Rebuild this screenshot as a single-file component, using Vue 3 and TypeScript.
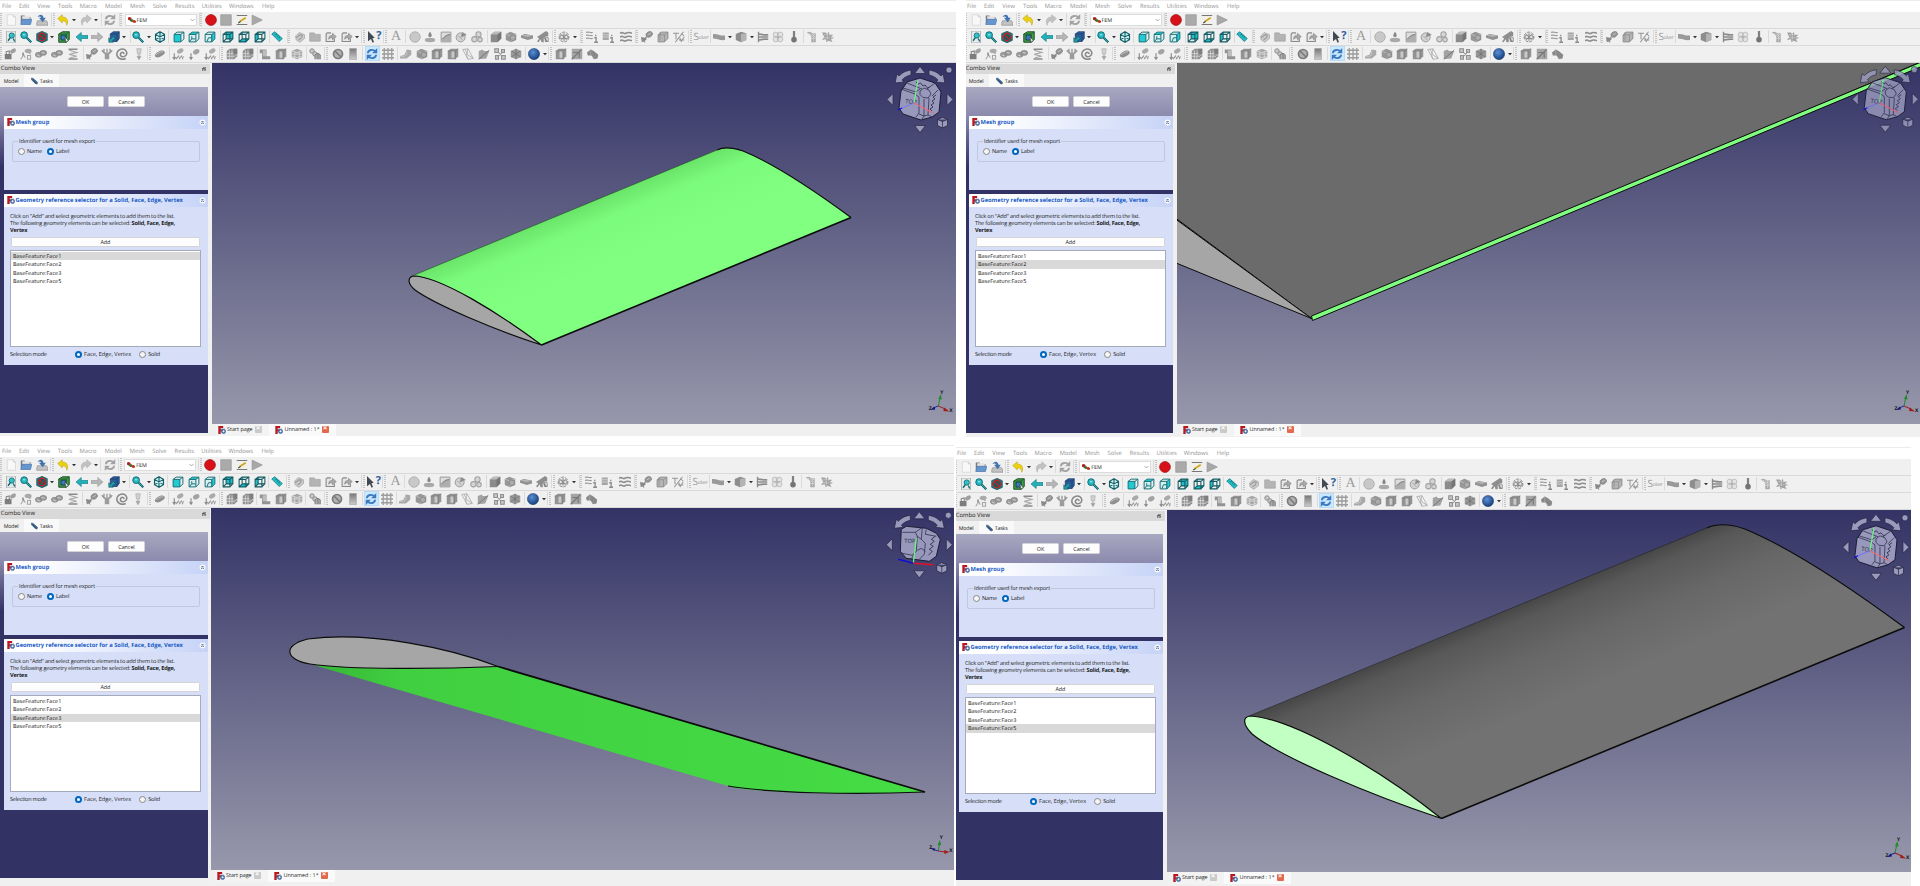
<script setup lang="ts">
interface Slot { k: string; x: number; w: number; gap: number }
interface Shot {
  id: string
  selected: number
  scale: number
  view: string
  cube: [number, number]
  axis: [number, number]
  flat: boolean
}

const shots: Shot[] = [
  { id: 'a', selected: 0, scale: 1, view: '212 63 744 361', cube: [920, 99], axis: [938.3, 406], flat: false },
  { id: 'b', selected: 1, scale: 1, view: '1177 64 743 361', cube: [1885.3, 99.7], axis: [1904, 407], flat: false },
  { id: 'c', selected: 2, scale: 0.998, view: '211 508 743 362', cube: [919.3, 544.3], axis: [938.3, 851], flat: true },
  { id: 'd', selected: 3, scale: 0.999, view: '1167 510 743 362', cube: [1875, 546.8], axis: [1894, 853], flat: false },
]

const menus: [string, number][] = [
  ['File', 17], ['Edit', 18.3], ['View', 20.7], ['Tools', 21.7], ['Macro', 25.3], ['Model', 25],
  ['Mesh', 22.7], ['Solve', 22.3], ['Results', 26.7], ['Utilities', 27.3], ['Windows', 33], ['Help', 20],
]

const widths: Record<string, number> = { drop: 5, sep: 1, grip: 2, combo: 72 }

function lay(spec: string): Slot[] {
  let end = 0
  return spec.trim().split(/\s+/).map((part) => {
    const [k, pos] = part.split(':')
    const x = Number(pos)
    const w = widths[k] ?? 13
    const gap = x - w / 2 - end
    end = x + w / 2
    return { k, x, w, gap }
  })
}

const bars: Slot[][] = [
  lay('grip:1 new:11 open:26 save:42 sep:51 grip:53.5 undo:63 drop:74 redo:86 drop:96 sep:101 refresh:110 sep:119 grip:121 combo:160.5 sep:199 grip:201 record:210.5 stop:226 edit:242 play:257'),
  lay('grip:1 fit:11 zoom:26 nosign:42 drop:52 gcube:64 left:82 right:97 bluebox:114 drop:124 sep:130 zoom:138 drop:149 iso:159.5 sep:168 front:178.5 top:194 side:210 sep:220 rear:228 bottom:244 rear2:260 sep:269 ruler:277 sep:287 grip:289 link:299.5 folder:315 export:331 export:347 drop:357 sep:361.5 grip:364 help:374 sep:383 grip:386 letter:396 sep:405.5 ball:414.5 dropper:430 chart:446 pie:461 rings:477 sep:487 cube:496 cube2:511 slab:527 tree:543 sep:552 grip:555 valve:564 drop:575 sep:580 grip:582 wavei:592 cyli:608 waves:626 sep:635 grip:637 gear:647 boxo:663 frac:679 sep:688 grip:690.5 solver:701 sep:710.5 beam:719 drop:730 face:741 drop:752 pipes:763 clover:778 thermo:794 sep:803 shellx:812 burst:828'),
  lay('grip:1 lock:10 force:26 pair:41 pair:57 spring:73 sep:83 gear:92 pull:107 swirl:122 weight:138.5 sep:147.5 grip:150 pill:160 sep:169 heat:178 tip:194 heat:210 sep:219.5 grip:222 mesh:232 mesh:248 sep:257 cutbox:265 face2:281 drum:297 sep:306 balls:315 sep:324.5 grip:327 forbid:337.5 grad:353 sep:362.5 sync:372 grid:387.5 sep:397 stairs:406 cube2:421.5 face2:437 face2:453 sheet:468 clip:484 net:500 burst2:515.5 sep:525 sphere:534 drop:544.5 sep:548.5 grip:551 face2:561 clipb:577 blob:593'),
]

const faces = ['BaseFeature:Face1', 'BaseFeature:Face2', 'BaseFeature:Face3', 'BaseFeature:Face5']
</script>

<template>
  <svg class="defs" width="0" height="0" aria-hidden="true">
    <defs>
      <linearGradient id="bg" x1="0" y1="0" x2="0" y2="1">
        <stop offset="0" stop-color="#333366" /><stop offset=".5" stop-color="#666689" /><stop offset="1" stop-color="#9898ac" />
      </linearGradient>
      <linearGradient id="wingGreen" gradientUnits="userSpaceOnUse" x1="560" y1="206" x2="588" y2="274">
        <stop offset="0" stop-color="#55bf55" /><stop offset=".1" stop-color="#69e369" /><stop offset=".4" stop-color="#7bfb7b" /><stop offset="1" stop-color="#80ff80" />
      </linearGradient>
      <linearGradient id="wingGrey" gradientUnits="userSpaceOnUse" x1="1480" y1="620" x2="1520" y2="717">
        <stop offset="0" stop-color="#464646" /><stop offset=".15" stop-color="#585858" /><stop offset=".5" stop-color="#676767" /><stop offset="1" stop-color="#727272" />
      </linearGradient>
      <linearGradient id="wingUnder" x1="0" y1="0" x2="1" y2="0">
        <stop offset="0" stop-color="#36b536" /><stop offset=".15" stop-color="#40cf40" /><stop offset="1" stop-color="#45dc45" />
      </linearGradient>
      <radialGradient id="ballBlue" cx=".4" cy=".35" r=".7"><stop offset="0" stop-color="#5b8fd6" /><stop offset="1" stop-color="#123a78" /></radialGradient>
      <linearGradient id="greyFade" x1="0" y1="0" x2="0" y2="1"><stop offset="0" stop-color="#777" /><stop offset="1" stop-color="#ccc" /></linearGradient>

      <symbol id="i-new" viewBox="0 0 16 16"><path d="M3 1h8l3 3v11H3z" fill="#f8f8f8" stroke="#d4d4d4" /><path d="M11 1v3h3" fill="#ddd" stroke="#ccc" /></symbol>
      <symbol id="i-open" viewBox="0 0 16 16"><path d="M1 2h5l1 2h7v10H1z" fill="#777b80" /><path d="M3 3h10v4H3z" fill="#e4e4e4" /><path d="M3 7h13l-2 7H1z" fill="#6696cf" stroke="#4a78b2" stroke-width=".7" /></symbol>
      <symbol id="i-save" viewBox="0 0 16 16"><path d="M2 9h12l2 3v3H1v-3z" fill="#c2c2c2" stroke="#858585" stroke-width=".8" /><path d="M2 4c3-4 7-4 8 1h3l-4 6-5-6h3C6 3 4 3 2 4z" fill="#3f74ae" /></symbol>
      <symbol id="i-undo" viewBox="0 0 16 16"><path d="M1 6l6-5v3c6 0 9 4 6 11 0-4-2-6-6-6v3z" fill="#ecd10f" stroke="#b99f10" stroke-width=".7" /></symbol>
      <symbol id="i-redo" viewBox="0 0 16 16"><path d="M15 6L9 1v3C3 4 0 8 3 15c0-4 2-6 6-6v3z" fill="#c2c2c2" stroke="#aaa" stroke-width=".7" /></symbol>
      <symbol id="i-refresh" viewBox="0 0 16 16"><path d="M2.500 7C3 2 10 1 12.500 5M13.500 9C13 14 6 15 3.500 11" fill="none" stroke="#a2a2a2" stroke-width="2.600" /><path d="M15 0v7H8zM1 16V9h7z" fill="#a2a2a2" /></symbol>
      <symbol id="i-sync" viewBox="0 0 16 16"><path d="M2.500 7C3 2 10 1 12.500 5M13.500 9C13 14 6 15 3.500 11" fill="none" stroke="#3c7abf" stroke-width="2.600" /><path d="M15 0v7H8zM1 16V9h7z" fill="#3c7abf" /></symbol>
      <symbol id="i-record" viewBox="0 0 16 16"><circle cx="8" cy="8" r="7.200" fill="#d81118" stroke="#9c1016" /></symbol>
      <symbol id="i-stop" viewBox="0 0 16 16"><path d="M1 1h14v14H1z" fill="#aaa" stroke="#999" /></symbol>
      <symbol id="i-edit" viewBox="0 0 16 16"><path d="M2 1h12v14H2z" fill="#f1f1e8" /><path d="M1 2h14M1 14h14" stroke="#777" stroke-width="1.400" /><path d="M5 10l8-5" stroke="#d0a31c" stroke-width="2.200" /><path d="M3 12l3-2" stroke="#444" stroke-width="1.500" /></symbol>
      <symbol id="i-play" viewBox="0 0 16 16"><path d="M1.500 1.500L15 8 1.500 14.500z" fill="#a8a8a8" stroke="#959595" /></symbol>
      <symbol id="i-fit" viewBox="0 0 16 16"><path d="M2 0h12v16H2z" fill="#e6e9e9" stroke="#8f9696" stroke-width=".8" /><circle cx="9" cy="6" r="3.500" fill="#2fc2c9" stroke="#0b5e66" /><path d="M7 9l-3 4M11 10l2 4" stroke="#0b6b73" stroke-width="1.800" /></symbol>
      <symbol id="i-zoom" viewBox="0 0 16 16"><circle cx="5.500" cy="5.500" r="4.500" fill="#27b9c2" stroke="#0b6670" stroke-width="1.200" /><path d="M4 5h3" stroke="#c4f2f3" stroke-width="1.200" /><path d="M9 9l6 6" stroke="#0b5e66" stroke-width="3" /><path d="M9.500 9.500l5 5" stroke="#31c5cb" stroke-width="1" /></symbol>
      <symbol id="i-nosign" viewBox="0 0 16 16"><path d="M1 3.500l7-3 7 3v9l-7 3-7-3z" fill="#14828d" stroke="#0c4d55" /><circle cx="8" cy="8" r="5" fill="#1d5a60" stroke="#c81e1e" stroke-width="1.700" /><path d="M4.500 5l7 6.500" stroke="#c81e1e" stroke-width="1.700" /></symbol>
      <symbol id="i-gcube" viewBox="0 0 16 16"><path d="M1 4l5-3h9v10l-4 4H1z" fill="#3c9a4a" stroke="#16481e" stroke-width="1.200" /><path d="M4 5.500h6.500V12H4z" fill="#3d78b8" stroke="#152c4b" /><path d="M1 4h10l4-3M11 4v11" fill="none" stroke="#1b5c27" /><path d="M9 8l5 5-2 .3-1 2z" fill="#fff" stroke="#333" stroke-width=".7" /></symbol>
      <symbol id="i-left" viewBox="0 0 16 16"><path d="M0 8l7-6v4h9v4H7v4z" fill="#23b2ba" stroke="#0c7780" stroke-width=".8" /></symbol>
      <symbol id="i-right" viewBox="0 0 16 16"><path d="M16 8L9 2v4H0v4h9v4z" fill="#b5b5b5" stroke="#9b9b9b" stroke-width=".8" /></symbol>
      <symbol id="i-bluebox" viewBox="0 0 16 16"><path d="M3 4l4-3h8v9l-3 4H3z" fill="#2d5f9f" stroke="#193b68" /><path d="M3 4h9l3-3M12 4v10" fill="none" stroke="#193b68" /><path d="M1 15V9l2 2 4-4 3 3-4 3 1 2z" fill="#229aa8" stroke="#0d4951" stroke-width=".7" /></symbol>
      <symbol id="i-iso" viewBox="0 0 16 16"><path d="M8 1l6 3.500v7L8 15l-6-3.500v-7zM8 1v14M2 4.500l12 7M14 4.500l-12 7" fill="#cfeff0" stroke="#146068" stroke-width="1.500" /></symbol>
      <symbol id="i-front" viewBox="0 0 16 16"><path d="M1.500 4.500h9v10h-9z" fill="#21cbd3" stroke="#0f7078" stroke-width="1.300" /><path d="M1.500 4.500l4-3h9v9l-4 4M14.500 1.500l-4 3" fill="#d7f0ef" fill-opacity="0" stroke="#156e75" stroke-width="1.300" /></symbol>
      <symbol id="i-top" viewBox="0 0 16 16"><path d="M1.500 4.500h9v10h-9zM10.500 14.500l4-4v-9M5 7v3.500L1.500 14.500M5 10.500h5" fill="#d7f0ef" stroke="#156e75" stroke-width="1.300" /><path d="M1.500 4.500l4-3h9l-4 3z" fill="#21cbd3" stroke="#156e75" stroke-width="1.200" /></symbol>
      <symbol id="i-side" viewBox="0 0 16 16"><path d="M1.500 4.500h9v10h-9zM1.500 4.500l4-3h9M4 14l2-5h4" fill="#d7f0ef" stroke="#156e75" stroke-width="1.300" /><path d="M10.500 4.500l4-3v9l-4 4z" fill="#21cbd3" stroke="#156e75" stroke-width="1.200" /></symbol>
      <symbol id="i-rear" viewBox="0 0 16 16"><path d="M5.500 1.500h9v9h-9z" fill="#20bec7" /><path d="M1.500 4.500h9v10h-9zM1.500 4.500l4-3h9v9l-4 4M14.500 1.500l-4 3M5.500 1.500v9h9M5.500 10.500l-4 4" fill="none" stroke="#125b62" stroke-width="1.400" /></symbol>
      <symbol id="i-rear2" viewBox="0 0 16 16"><path d="M1.500 4.500l4-3v9l-4 4z" fill="#20bec7" /><path d="M1.500 4.500h9v10h-9zM1.500 4.500l4-3h9v9l-4 4M14.500 1.500l-4 3M5.500 1.500v9h9M5.500 10.500l-4 4" fill="none" stroke="#125b62" stroke-width="1.400" /></symbol>
      <symbol id="i-bottom" viewBox="0 0 16 16"><path d="M1.500 14.500l4-4h9l-4 4z" fill="#20bec7" /><path d="M1.500 4.500h9v10h-9zM1.500 4.500l4-3h9v9l-4 4M14.500 1.500l-4 3M5.500 1.500v9h9M5.500 10.500l-4 4" fill="none" stroke="#125b62" stroke-width="1.400" /></symbol>
      <symbol id="i-ruler" viewBox="0 0 16 16"><path d="M1 4l4-3 10 9-4 4z" fill="#21bcc4" stroke="#0f747c" /><path d="M6 5l2-1M8 7l2-1M10 9l2-1" stroke="#0b575e" /></symbol>
      <symbol id="i-link" viewBox="0 0 16 16"><path d="M2 7l5-5 7 3v5l-6 5-5-3z" fill="#ccc" stroke="#a4a4a4" /><path d="M3 9l5-4 3 1-1 3-4 3" fill="none" stroke="#9a9a9a" stroke-width="1.600" /></symbol>
      <symbol id="i-folder" viewBox="0 0 16 16"><path d="M1 2.500h6l1 2h7v9H1z" fill="#b4b4b4" stroke="#a2a2a2" /></symbol>
      <symbol id="i-export" viewBox="0 0 16 16"><path d="M8 2.500H3L1.500 4v10h11V10" fill="#e7e7e7" stroke="#8a8a8a" stroke-width="1.500" /><path d="M5 11c0-4 1-5 5-5V3l5 4.500-5 4V9c-3 0-4 0-5 2z" fill="#aaa" stroke="#808080" stroke-width=".8" /></symbol>
      <symbol id="i-help" viewBox="0 0 16 16"><path d="M0 0l9 9-3 .5 2 5-2 1-2-5-4 3z" fill="#414a52" /></symbol>
      <symbol id="i-ball" viewBox="0 0 16 16"><circle cx="8" cy="8" r="7" fill="#c8c8c8" stroke="#a5a5a5" /></symbol>
      <symbol id="i-dropper" viewBox="0 0 16 16"><ellipse cx="8" cy="12" rx="7" ry="3" fill="#a9a9a9" /><path d="M8 1c3 4 3 7 0 7S5 5 8 1z" fill="#888" /></symbol>
      <symbol id="i-chart" viewBox="0 0 16 16"><path d="M1.500 1.500h13v13h-13z" fill="#ddd" stroke="#999" stroke-width="1.300" /><path d="M2 12c4 0 4-8 12-7v9H2z" fill="#aeaeae" /><path d="M2 11c4 0 5-8 12-6" fill="none" stroke="#888" stroke-width="1.500" /></symbol>
      <symbol id="i-pie" viewBox="0 0 16 16"><circle cx="7.500" cy="8.500" r="6" fill="#d3d3d3" stroke="#9a9a9a" stroke-width="1.300" /><path d="M8 8l2-6 5 3zM4 6l6 6" fill="#888" stroke="#9a9a9a" /></symbol>
      <symbol id="i-rings" viewBox="0 0 16 16"><g fill="#d5d5d5" stroke="#a2a2a2" stroke-width="1.400"><circle cx="10" cy="4.500" r="3.500" /><circle cx="4.500" cy="11" r="3.500" /><circle cx="12" cy="11.500" r="3" /></g></symbol>
      <symbol id="i-cube" viewBox="0 0 16 16"><path d="M1 4.500L6 1h9v9l-5 5H1z" fill="#8b8b8b" /><path d="M1 4.500L6 1h9l-5 3.500z" fill="#bcbcbc" /><path d="M10 4.500L15 1v9l-5 5z" fill="#767676" /></symbol>
      <symbol id="i-cube2" viewBox="0 0 16 16"><path d="M1 4l6-3 8 3v8l-7 3-7-3z" fill="#979797" /><path d="M1 4l7 3 7-3M8 7v8" stroke="#c3c3c3" fill="none" /><circle cx="10.500" cy="9" r="3.500" fill="#adadad" stroke="#808080" /></symbol>
      <symbol id="i-slab" viewBox="0 0 16 16"><path d="M0 6l5-2 11 2v4l-7 2-9-3z" fill="#929292" /><path d="M0 6l9 2 7-2-9-1z" fill="#b5b5b5" /></symbol>
      <symbol id="i-tree" viewBox="0 0 16 16"><path d="M0 8L12 0l3 2v5L10 8l5 6h-3L9 9v6H6l-1-4-3 4-2-1 3-4z" fill="#8e8e8e" /><path d="M11 9h4v5h-4z" fill="none" stroke="#777" /></symbol>
      <symbol id="i-valve" viewBox="0 0 16 16"><circle cx="8" cy="8" r="6.500" fill="#e8e8e8" stroke="#888" stroke-width="1.300" stroke-dasharray="4 1.500" /><path d="M2 8l3-3 3 3 3-3 3 3-3 3-3-3-3 3zM8 3v10" fill="none" stroke="#8b8b8b" stroke-width="1.400" /></symbol>
      <symbol id="i-waves" viewBox="0 0 16 16"><path d="M0 3c4-3 5 2 8 0s4-1 8 0M0 8c4-3 5 2 8 0s4-1 8 0M0 13c4-3 5 2 8 0s4-1 8 0" fill="none" stroke="#8e8e8e" stroke-width="2.200" /></symbol>
      <symbol id="i-wavei" viewBox="0 0 16 16"><path d="M0 2c4-2 4 1 9 0M0 6c4-2 4 1 9 0M0 10c4-2 4 1 9 0" fill="none" stroke="#999" stroke-width="1.600" /><path d="M13 5v2M11 9h2.500v6M11 15h5" fill="none" stroke="#888" stroke-width="1.700" /></symbol>
      <symbol id="i-cyli" viewBox="0 0 16 16"><path d="M1 2h8v10H1z" fill="#a5a5a5" /><path d="M1 5h8M1 8h8" stroke="#ddd" /><path d="M13 5v2M11 9h2.500v6M11 15h5" fill="none" stroke="#888" stroke-width="1.700" /></symbol>
      <symbol id="i-gear" viewBox="0 0 16 16"><ellipse cx="11" cy="4.500" rx="4.500" ry="3.500" fill="#959595" stroke="#858585" transform="rotate(-30 11 4.500)" /><path d="M9 5l4-2" stroke="#c4c4c4" stroke-width="1.300" /><path d="M0 8l5 1 3-3-1 6-2 1 1 3-3-2-2 1z" fill="#898989" /></symbol>
      <symbol id="i-boxo" viewBox="0 0 16 16"><path d="M1.500 5l4-3.500h9V10L10 14.500H1.500z" fill="#b4b4b4" stroke="#8d8d8d" stroke-width="1.300" /><path d="M1.500 5H10l4.500-3.500M10 5v9.500M4 1.500v11" fill="none" stroke="#8d8d8d" /></symbol>
      <symbol id="i-frac" viewBox="0 0 16 16"><path d="M0 3h8M4 3v8M14 1L3 15M9 9l2 5 4-6M11 3l4 4M8 12h7" fill="none" stroke="#959595" stroke-width="1.400" /></symbol>
      <symbol id="i-beam" viewBox="0 0 16 16"><path d="M0 4c5-1 10 3 16 2v6c-6 1-11-2-16-2z" fill="#999" /></symbol>
      <symbol id="i-face" viewBox="0 0 16 16"><path d="M1 4l7-3 7 2v9l-7 3-7-3z" fill="#8d8d8d" /><path d="M8 4l7-1v9l-7 3z" fill="#b3b3b3" /></symbol>
      <symbol id="i-face2" viewBox="0 0 16 16"><path d="M1 4l4-3h10v10l-4 4H1z" fill="#939393" /><path d="M6 4h4v9H6z" fill="#c9c9c9" /><path d="M1 4h10l4-3M11 4v11" fill="none" stroke="#7b7b7b" /></symbol>
      <symbol id="i-pipes" viewBox="0 0 16 16"><path d="M2 1v14" stroke="#8b8b8b" stroke-width="1.800" /><path d="M2 4c4 0 5 2 13 1M2 8h13M2 12c4 0 5-2 13-1" fill="none" stroke="#8b8b8b" stroke-width="2.200" /></symbol>
      <symbol id="i-clover" viewBox="0 0 16 16"><g fill="#e2e2e2" stroke="#bbb" stroke-width="1.200"><circle cx="5" cy="5" r="3.500" /><circle cx="11" cy="5" r="3.500" /><circle cx="5" cy="11" r="3.500" /><circle cx="11" cy="11" r="3.500" /></g><path d="M8 3v10M4 8h8" stroke="#aaa" /></symbol>
      <symbol id="i-thermo" viewBox="0 0 16 16"><path d="M6.500 0h3v8.500h-3z" fill="#808080" /><circle cx="8" cy="11.500" r="3.700" fill="#747474" /></symbol>
      <symbol id="i-shellx" viewBox="0 0 16 16"><path d="M1 2l4-1 4 2h4v12H7V6z" fill="#a9a9a9" /><path d="M1 3l12 2M5 6l8 2M7 10h6M10 2v12" stroke="#e2e2e2" stroke-dasharray="2 1" /></symbol>
      <symbol id="i-burst" viewBox="0 0 16 16"><path d="M0 2h5l2 2 2-3 1 4h5l-3 3 4 1-4 2 2 4-5-2-3 2-1-4-5 1 3-4z" fill="#a2a2a2" /><path d="M3 5h9M3 9h10M7 3v10" stroke="#ddd" stroke-dasharray="2 1" /></symbol>
      <symbol id="i-lock" viewBox="0 0 16 16"><path d="M1 8h9v7H1z" fill="#7d7d7d" /><path d="M3 8V5l4-1v4M9 7l6-6" fill="none" stroke="#888" stroke-width="1.500" /><ellipse cx="12" cy="4" rx="4" ry="2.800" fill="#a0a0a0" transform="rotate(-30 12 4)" /></symbol>
      <symbol id="i-force" viewBox="0 0 16 16"><path d="M1 15l4-6 2 4M6 4h4l4 4M10 15v-5h4v5z" fill="none" stroke="#a8a8a8" stroke-width="1.500" /><ellipse cx="11" cy="4" rx="4.500" ry="3" fill="#aaa" /><path d="M4 6v4" stroke="#888" stroke-width="2" /></symbol>
      <symbol id="i-pair" viewBox="0 0 16 16"><g fill="#9a9a9a" stroke="#858585"><ellipse cx="5" cy="9" rx="4.500" ry="3.300" /><ellipse cx="11" cy="6.500" rx="4.500" ry="3.300" /></g><path d="M3 9l3 2M9 6l4 1" stroke="#cfcfcf" stroke-width="1.400" /></symbol>
      <symbol id="i-spring" viewBox="0 0 16 16"><path d="M2 1.500h12M2 14.500h12" stroke="#8a8a8a" stroke-width="2" /><path d="M3 3l10 3-10 2.500L13 11 4 13" fill="none" stroke="#aaa" stroke-width="1.600" /></symbol>
      <symbol id="i-pull" viewBox="0 0 16 16"><path d="M8 1v5M1 3l4 4M15 3l-4 4M4 1v4M12 1v4" fill="none" stroke="#929292" stroke-width="1.700" /><path d="M2 6h12l-3 2v7H5V8z" fill="#9c9c9c" /></symbol>
      <symbol id="i-swirl" viewBox="0 0 16 16"><path d="M13 14c-6 3-12-1-12-6 1-7 10-9 13-3 2 5-5 9-8 5-1-4 4-6 5-2" fill="none" stroke="#888" stroke-width="2" /></symbol>
      <symbol id="i-weight" viewBox="0 0 16 16"><path d="M5 1h6l-1 7H6z" fill="#d0d0d0" stroke="#b2b2b2" /><path d="M8 8v3M5.500 11h5L8 15.500z" fill="#a3a3a3" stroke="#a3a3a3" /></symbol>
      <symbol id="i-pill" viewBox="0 0 16 16"><path d="M1 10c2-4 8-8 12-6 3 2 1 4-2 6-4 3-9 4-10 0z" fill="#8f8f8f" /><path d="M3 9c3-3 6-4 9-4" stroke="#c2c2c2" fill="none" stroke-width="1.300" /></symbol>
      <symbol id="i-heat" viewBox="0 0 16 16"><path d="M3 7v7M1 12l2 3 2-3" fill="none" stroke="#8a8a8a" stroke-width="1.500" /><ellipse cx="11" cy="4" rx="4.500" ry="3" fill="#aaa" transform="rotate(-25 11 4)" /><path d="M6 15c0-4 2-1 3-5M10 15c0-4 2-1 3-5M14 15c0-3 1-2 1-4" fill="none" stroke="#999" stroke-width="1.600" /></symbol>
      <symbol id="i-tip" viewBox="0 0 16 16"><path d="M4 7v7M2 12l2 3 2-3" fill="none" stroke="#8a8a8a" stroke-width="1.500" /><ellipse cx="11" cy="5" rx="4.500" ry="3.200" fill="#a3a3a3" transform="rotate(-25 11 5)" /></symbol>
      <symbol id="i-mesh" viewBox="0 0 16 16"><path d="M1 4l4-3h10v10l-4 4H1z" fill="#8f8f8f" /><path d="M1 7.500h11l3-3M1 11h11l3-3M4.500 3v12M8 3v12" fill="none" stroke="#dcdcdc" /><path d="M10 1h5v7h-5z" fill="#7f7f7f" /></symbol>
      <symbol id="i-cutbox" viewBox="0 0 16 16"><path d="M1 2h9v9h5v4H4V7H1z" fill="#939393" /><path d="M5 3h5v8H5z" fill="#bdbdbd" /></symbol>
      <symbol id="i-drum" viewBox="0 0 16 16"><path d="M1 4l7-3 7 3v8l-7 3-7-3z" fill="#a6a6a6" /><path d="M1 4l7 2 7-2M1 8h14M2 11l6 2 6-2M5 5v9M11 5v9" fill="none" stroke="#e2e2e2" /></symbol>
      <symbol id="i-balls" viewBox="0 0 16 16"><g fill="#c8c8c8" stroke="#8d8d8d" stroke-width="1.300"><circle cx="4" cy="4" r="3" /><circle cx="8" cy="8" r="3" /></g><path d="M8 15V9l4-2 3 2v6M12 7v8" fill="#aaa" stroke="#808080" stroke-width="1.300" /></symbol>
      <symbol id="i-forbid" viewBox="0 0 16 16"><circle cx="8" cy="8" r="6" fill="#b2b2b2" stroke="#7c7c7c" stroke-width="2.300" /><path d="M4 4l8 8" stroke="#7c7c7c" stroke-width="2.300" /></symbol>
      <symbol id="i-grad" viewBox="0 0 16 16"><path d="M3.500 .5h9v15h-9z" fill="url(#greyFade)" stroke="#aaa" /></symbol>
      <symbol id="i-grid" viewBox="0 0 16 16"><path d="M0 3h16M0 8h16M0 13h16M3 0v16M8 0v16M13 0v16" stroke="#9c9c9c" stroke-width="1.700" /></symbol>
      <symbol id="i-stairs" viewBox="0 0 16 16"><path d="M0 11l6-2 3-7 6 1v6l-6 5H0z" fill="#a9a9a9" /><path d="M0 11h6l3-2V4" fill="none" stroke="#ccc" /></symbol>
      <symbol id="i-sheet" viewBox="0 0 16 16"><path d="M1 2l7-1 7 13-7 1zM4 1.500l4 8 7 4M8 1l-2 8 2 6" fill="none" stroke="#a5a5a5" /></symbol>
      <symbol id="i-clip" viewBox="0 0 16 16"><path d="M1 4l5-2 2 2h7l-4 10-10 1z" fill="#a3a3a3" /><path d="M1 15l14-12" stroke="#777" stroke-width="1.300" /></symbol>
      <symbol id="i-clipb" viewBox="0 0 16 16"><path d="M1 1h14v14H1z" fill="#a5a5a5" /><path d="M1 15L14 2M3 6h8v7" fill="none" stroke="#777" stroke-width="1.500" /></symbol>
      <symbol id="i-net" viewBox="0 0 16 16"><path d="M1 1h5v5H1zM10 2h4v4h-4zM2 10h4v5H2zM10 10h5v5h-5zM5 5l6 6M12 5l-7 7" fill="#c4c4c4" stroke="#909090" stroke-width="1.400" /></symbol>
      <symbol id="i-burst2" viewBox="0 0 16 16"><path d="M1 4l7-3 7 3v8l-7 3-7-3z" fill="#9a9a9a" /><path d="M2 4l12 8M14 4L2 12M8 1v14" stroke="#6f6f6f" /></symbol>
      <symbol id="i-sphere" viewBox="0 0 16 16"><circle cx="8" cy="8" r="7.500" fill="url(#ballBlue)" stroke="#102f60" stroke-width=".6" /></symbol>
      <symbol id="i-blob" viewBox="0 0 16 16"><path d="M0 6l5-4 4 2 6 5-1 5-5 1-3-5H1z" fill="#888" /><path d="M5 2v7l5 5" fill="none" stroke="#aaa" /></symbol>
      <symbol id="i-drop" viewBox="0 0 10 10"><path d="M0 2.500h10L5 8z" fill="#333" /></symbol>
      <symbol id="i-app" viewBox="0 0 16 16"><path d="M1 0h9v4H5v3h4v3H5v6H1z" fill="#c9141e" stroke="#77151b" stroke-width=".6" /><circle cx="11" cy="10.500" r="3.300" fill="none" stroke="#4874ad" stroke-width="2.600" /><circle cx="11" cy="10.500" r="4.900" fill="none" stroke="#35588b" stroke-width="1.200" stroke-dasharray="2 1.400" /></symbol>
      <symbol id="i-pencil" viewBox="0 0 16 16"><path d="M1 1l4 1 10 9-1 4-4-1L1 5z" fill="#3d6892" stroke="#24435f" /><path d="M4 5l8 8" stroke="#17324b" /></symbol>
      <symbol id="i-fem" viewBox="0 0 16 12"><path d="M0 1l4-1 3 2v4L3 7 0 5z" fill="#b11e1e" /><path d="M4 5l4-1 3 2v3l-4 1-3-2z" fill="#2f7a2d" /><path d="M9 7l4-1 3 2v3l-4 1-3-2z" fill="#c03020" /></symbol>
      <symbol id="i-fold" viewBox="0 0 16 16"><circle cx="8" cy="8" r="7.500" fill="#fff" stroke="#b7c3e3" /><path d="M5 7.500L8 4.500l3 3M5 11.500l3-3 3 3" fill="none" stroke="#24408c" stroke-width="1.900" /></symbol>

      <g id="navArrows" fill="#9a9abd" stroke="#22223c" stroke-width=".7">
        <path d="M-5.500-25.500L0-32.500l5.500 7z" /><path d="M-5.500 26.500L0 33.500l5.500-7z" />
        <path d="M-33 .5l6-6v12z" /><path d="M33 .5l-6-6v12z" /><circle cx="29" cy="-29" r="3.100" />
        <path d="M-9-29v5c-5 1-7 3-9 5l2 2-9 1 2-9 2 2c3-3 6-5 12-6z" /><path d="M9-29v5c5 1 7 3 9 5l-2 2 9 1-2-9-2 2c-3-3-6-5-12-6z" />
        <path d="M17.500 20.500l5-2 5 2v6l-5 2.500-5-2.500zM17.500 20.500l5 2 5-2M22.500 22.500V29" />
      </g>
      <g id="cubeIso">
        <path d="M-13-17L0-21l15 5 6 9-2 20-7 5-11 3-18-6-4-6 2-17z" fill="#9898bc" stroke="#15152a" stroke-width=".9" />
        <path d="M-19-10l14 5 4 3v16l-3 4M-13-17l-4 6 13 4 4-3M-13-16l15 6M15-16l-8 6M4 0v17M9-1l-1 17M12-3l6-6M-1 15l5 2 4-1M4 17l-2 3M8 16l4 2" fill="none" stroke="#2a2a44" stroke-width=".75" />
        <path d="M0-8l4-3 5 2 2 4-3 4-5-.5-3-3z" fill="#9898bc" stroke="#2a2a44" stroke-width=".75" />
        <path d="M-4-17l2.500 2 2-1 2.500 3 2-1 2.500 3 2-1M16-4l-3 2 2 2-3 2 2 2-3 2 2 2-3 2 2 2" fill="none" stroke="#30304c" stroke-width=".9" />
        <text x="-15" y="4" font-size="6" transform="rotate(8 -15 4)" fill="#26263d">TOP</text>
        <path d="M-6 4l4-23" stroke="#63ff79" stroke-width="1.100" /><path d="M-6 4l19 10" stroke="#f06a78" stroke-width="1.100" /><path d="M-6 4l-12 5" stroke="#7777f5" /><path d="M-18 9l-4 2" stroke="#0a0ae0" stroke-width="1.200" />
      </g>
      <g id="cubeFlat">
        <path d="M-18-15l5-3 20 2 10 5 4 6-4 17-7 5-23-3-6-7z" fill="#9898bc" stroke="#15152a" stroke-width=".9" />
        <path d="M-17-12l13 0 2 4-1 15-4 4-10-2M-4-12l7-5M3-17l-1 12 4 4-1 11-5 5M-2-8l4 3M-2 6l4-2 4 3M-4 7l-4 8M7-15l-1 5 11 2" fill="none" stroke="#2a2a44" stroke-width=".75" />
        <path d="M16-8l-4 3 3 2-4 3 3 2-4 3 3 2-4 4" fill="none" stroke="#30304c" stroke-width=".9" />
        <text x="-15" y="-1" font-size="5.800" fill="#26263d">TOP</text>
        <path d="M-6 19l3-25" stroke="#63ff79" stroke-width="1.200" /><path d="M-6 19l20 1.500" stroke="#e41027" stroke-width="1.600" /><path d="M-6 19l-15-4" stroke="#0e0ed6" stroke-width="1.400" />
      </g>
    </defs>
  </svg>

  <main class="board">
    <section v-for="s in shots" :key="s.id" class="shot" :class="'shot-' + s.id">
      <div class="win">
        <nav class="menu">
          <span v-for="m in menus" :key="m[0]" :style="{ width: m[1] * s.scale + 'px' }">{{ m[0] }}</span>
        </nav>
        <div v-for="(bar, bi) in bars" :key="bi" class="bar">
          <template v-for="(t, i) in bar" :key="i">
            <span v-if="t.k === 'combo'" class="combo" :style="{ marginLeft: t.gap * s.scale + 'px' }">
              <svg class="fem"><use href="#i-fem" /></svg><span>FEM</span><svg class="chev" viewBox="0 0 8 5"><path d="M1 1l3 3 3-3" fill="none" stroke="#777" /></svg>
            </span>
            <span v-else-if="t.k === 'sep'" class="sep" :style="{ marginLeft: t.gap * s.scale + 'px' }" />
            <span v-else-if="t.k === 'grip'" class="grip" :style="{ marginLeft: t.gap * s.scale + 'px' }" />
            <span v-else-if="t.k === 'letter'" class="tool letter" :style="{ marginLeft: t.gap * s.scale + 'px' }">A</span>
            <span v-else-if="t.k === 'solver'" class="tool solver" :style="{ marginLeft: t.gap * s.scale + 'px' }">S<small>olver</small></span>
            <span v-else class="tool" :class="['k-' + t.k]" :style="{ marginLeft: t.gap * s.scale + 'px' }">
              <svg><use :href="'#i-' + t.k" /></svg><b v-if="t.k === 'help'">?</b>
            </span>
          </template>
        </div>

        <div class="body">
          <aside class="dock">
            <header class="dock-title"><span>Combo View</span>
              <svg viewBox="0 0 8 8"><path d="M2.500 2.500v-2h5v4h-2M.5 2.800h5v4.500h-5zM.5 3.500h5" fill="none" stroke="#333" stroke-width="1" /></svg>
            </header>
            <div class="dock-tabs"><span class="tab">Model</span><span class="tab on"><svg><use href="#i-pencil" /></svg>Tasks</span></div>
            <div class="tasks">
              <div class="buttons"><button>OK</button><button>Cancel</button></div>
              <div class="box mesh">
                <h3><svg class="app"><use href="#i-app" /></svg><span>Mesh group</span><svg class="fold"><use href="#i-fold" /></svg></h3>
                <fieldset><legend>Identifier used for mesh export</legend>
                  <div class="choice"><label><i class="radio" />Name</label><label><i class="radio on" />Label</label></div>
                </fieldset>
              </div>
              <div class="box geo">
                <h3><svg class="app"><use href="#i-app" /></svg><span>Geometry reference selector for a Solid, Face, Edge, Vertex</span><svg class="fold"><use href="#i-fold" /></svg></h3>
                <p>Click on "Add" and select geometric elements to add them to the list.<br>The following geometry elements can be selected: <b>Solid, Face, Edge,<br>Vertex</b></p>
                <button class="add">Add</button>
                <ul><li v-for="(f, i) in faces" :key="f" :class="{ sel: i === s.selected }">{{ f }}</li></ul>
                <div class="mode"><span class="mode-name">Selection mode</span><label><i class="radio on" />Face, Edge, Vertex</label><label><i class="radio" />Solid</label></div>
              </div>
            </div>
          </aside>

          <div class="stage">
            <svg class="view" :viewBox="s.view" preserveAspectRatio="none">
              <rect :x="s.view.split(' ')[0]" :y="s.view.split(' ')[1]" width="744" height="363" fill="url(#bg)" />
              <g v-if="s.id === 'a'" stroke="#0c0c0c" stroke-width="1.200" stroke-linejoin="round" fill="none">
                <path d="M541.500 345L851 217.500C815 191 775 164 743 151C731 147 722 147.500 717 150L413 275.500C440 276 500 314 541.500 345z" fill="url(#wingGreen)" stroke="none" />
                <path d="M541.500 345C495 330 436 305 415 290C408 284 407 278 413 276C440 276 500 314 541.500 345z" fill="#a6a6a6" />
                <path d="M851 217.500C815 191 775 164 743 151C731 147 722 147.500 717 150" />
                <path d="M717 150L413 275.500" stroke="#1f4a1f" stroke-width=".6" />
                <path d="M541.500 345L851 217.500" stroke-width="1.600" />
              </g>
              <g v-else-if="s.id === 'b'" stroke="#0c0c0c" stroke-width="1" stroke-linejoin="round">
                <path d="M1170 57H1935L1311.500 319.500L1170 215z" fill="#6b6b6b" />
                <path d="M1170 216L1311.500 319.500L1170 261.500z" fill="#a6a6a6" />
                <path d="M1311.500 317L1925 61.500V66L1312.500 321.500z" fill="#80ff80" />
              </g>
              <g v-else-if="s.id === 'c'" stroke="#0c0c0c" stroke-width="1.200" stroke-linejoin="round" fill="none">
                <path d="M310 664C350 670 440 669 498 666.500L925 792C850 795 770 793 735 788z" fill="url(#wingUnder)" stroke="none" />
                <path d="M310 664C285 660 282 645 308 639C370 631 450 648 498 666.500C440 669 350 670 310 664z" fill="#a6a6a6" />
                <path d="M925 792C850 795 770 793 728 786" />
                <path d="M498 666.500L925 792" stroke-width="1.800" />
              </g>
              <g v-else stroke="#0c0c0c" stroke-width="1.200" stroke-linejoin="round" fill="none">
                <path d="M1441 818.500L1903.500 627.500C1850 588 1790 548 1744 529C1727 523 1715 524 1706 528L1249 716C1290 718 1375 766 1441 818.500z" fill="url(#wingGrey)" stroke="none" />
                <path d="M1441 818.500C1370 795 1280 757 1252 734C1243 725 1242 717 1250 716C1290 718 1375 766 1441 818.500z" fill="#c2ffc2" />
                <path d="M1903.500 627.500C1850 588 1790 548 1744 529C1727 523 1715 524 1706 528" />
                <path d="M1706 528L1249 716" stroke="#222" stroke-width=".6" />
                <path d="M1441 818.500L1903.500 627.500" stroke-width="1.600" />
              </g>
              <g :transform="`translate(${s.cube[0]} ${s.cube[1]})`" :opacity="s.id === 'b' ? 0.85 : 1" class="nav">
                <use href="#navArrows" /><use :href="s.flat ? '#cubeFlat' : '#cubeIso'" />
              </g>
              <g :transform="`translate(${s.axis[0]} ${s.axis[1]})`" class="triad">
                <template v-if="s.flat">
                  <path d="M0 0l1-6" stroke="#1f8b2a" /><path d="M-.7-6L1.500-11 3-6z" fill="#1f8b2a" />
                  <path d="M0 0l7 1" stroke="#a11b1b" /><path d="M6-1l5 2-5 2z" fill="#a11b1b" />
                  <path d="M0 0l-5-1.500" stroke="#222a99" /><path d="M-3-2.500l-5-.5 4 3z" fill="#14147c" />
                  <text x="1.500" y="-12">Y</text><text x="11" y="1">X</text><text x="-9" y="-2.500">Z</text>
                </template>
                <template v-else>
                  <path d="M0 0l1.500-7" stroke="#1f8b2a" /><path d="M0-7L2.500-12 3.500-6.500z" fill="#1f8b2a" />
                  <path d="M0 0l7 3" stroke="#a11b1b" /><path d="M6 1.500l5 4-6-.5z" fill="#a11b1b" />
                  <path d="M0 0l-5 2" stroke="#222a99" /><path d="M-4 .5l-4 3.500 5-.5z" fill="#14147c" />
                  <text x="2" y="-12.500">Y</text><text x="11" y="5.500">X</text><text x="-9.500" y="4">Z</text>
                </template>
              </g>
            </svg>
            <div class="doc-tabs">
              <span class="doc"><svg><use href="#i-app" /></svg><span>Start page</span><i class="close">×</i></span>
              <span class="doc on"><svg><use href="#i-app" /></svg><span>Unnamed : 1*</span><i class="close red">×</i></span>
            </div>
          </div>
        </div>
      </div>
    </section>
  </main>
</template>

<style>
html, body { margin: 0; background: #fff; overflow: hidden; }
</style>
<style scoped>
.defs { display: block; width: 0; height: 0; }
.board { width: 1920px; height: 886px; overflow: hidden; display: flex; flex-wrap: wrap; align-content: flex-start; background: #fff; font-family: "Open Sans", "Noto Sans", sans-serif; color: #1b1b1b; font-size: 5.600px; text-rendering: geometricPrecision; }
.shot { overflow: hidden; box-sizing: border-box; }
.shot-a { width: 956px; height: 445px; margin-right: 10px; }
.shot-b { width: 954px; height: 445px; }
.shot-c { width: 954px; height: 441px; margin-right: 2px; }
.shot-d { width: 955px; height: 441px; padding-top: 2px; }
.win { height: 436px; background: #f0f0f0; border-top: 1px solid #ececec; box-sizing: border-box; display: flex; flex-direction: column; }
.shot-b .win { margin-left: -1px; height: 437px; }
.shot-d .win { margin-left: -1px; height: 439px; }
.shot-c .win { height: 441px; }
.menu { height: 10.500px; background: #fff; display: flex; align-items: center; padding-left: 2px; color: #929292; font-size: 5.800px; line-height: 10px; flex: none; }
.menu span { flex: none; white-space: nowrap; }
.bar { height: 17.200px; flex: none; box-sizing: border-box; border-bottom: 1px solid #d9d9d9; display: flex; align-items: center; overflow: hidden; }
.tool { width: 13px; height: 15px; flex: none; display: flex; align-items: center; justify-content: center; position: relative; }
.tool svg { width: 12px; height: 12px; flex: none; }
.k-drop { width: 5px; }
.k-drop svg { width: 4px; height: 4px; }
.k-sync { background: #cce8ff; box-shadow: 0 0 0 1px #b5dcf9; height: 13px; }
.k-help b { position: absolute; right: -1px; top: 0; font-size: 11px; line-height: 14px; color: #32629c; }
.letter { font: 14px/15px "Liberation Serif", serif; color: #999; }
.solver { font-size: 10px; line-height: 15px; color: #999; letter-spacing: -.3px; }
.solver small { font-size: 5px; padding-top: 4px; letter-spacing: -.4px; }
.sep { width: 1px; height: 13px; background: #dadada; flex: none; }
.grip { width: 2px; height: 13px; flex: none; background: repeating-linear-gradient(#c3c3c3 0 1px, #f0f0f0 1px 2px); }
.combo { width: 72px; height: 12px; flex: none; box-sizing: border-box; border: 1px solid #dcdcdc; background: #fff; display: flex; align-items: center; padding-left: 2px; font-size: 5.400px; color: #222; }
.fem { width: 8px; height: 6px; margin-right: 1px; }
.chev { width: 5px; height: 4px; margin-left: auto; margin-right: 1px; }
.body { flex: 1; display: flex; min-height: 0; }
.dock { width: 212px; flex: none; display: flex; flex-direction: column; }
.shot-c .dock { width: 211px; }
.dock-title { width: 210px; margin-top: 1px; height: 9.500px; background: #d9d9d9; display: flex; align-items: center; justify-content: space-between; padding: 0 3px 0 .7px; box-sizing: border-box; font-size: 5.900px; line-height: 9px; flex: none; }
.dock-title svg { width: 4.500px; height: 4.500px; margin-right: 1px; }
.dock-tabs { height: 13.400px; flex: none; display: flex; padding-top: .5px; box-sizing: border-box; }
.tab { width: 20px; padding-left: 3.700px; line-height: 12px; font-size: 5.300px; letter-spacing: -.15px; display: flex; align-items: center; }
.tab.on { width: 28.500px; padding-left: 7px; background: #f9f9f9; }
.tab svg { width: 7px; height: 8px; margin-right: 2px; }
.tasks { width: 208px; height: 346px; flex: none; box-sizing: border-box; padding: 0 0 0 3.500px; background: linear-gradient(#a9a8c1, #8d8bae 28px, #615e8b 52px, #333264 80px); }
.buttons { height: 29px; display: flex; padding: 9.300px 0 0 63.500px; gap: 4px; box-sizing: border-box; }
button { border: 1px solid #d4d4d8; border-radius: 1.500px; background: #fdfdfd; box-sizing: border-box; font: inherit; font-size: 5.400px; letter-spacing: -.05px; padding: 0; color: #1b1b1b; line-height: 8.500px; }
.buttons button { width: 37px; height: 11px; }
.box { background: #d6dff7; }
.box h3 { margin: 0; height: 13px; display: flex; align-items: center; padding: 0 2.500px 0 3px; background: linear-gradient(90deg, #fff 15%, #c6d3f7); border-radius: 2px 2px 0 0; font-size: 5.750px; line-height: 13px; color: #215dc6; font-weight: 700; white-space: nowrap; }
.app { width: 8px; height: 8px; margin-right: 1px; flex: none; }
.fold { width: 7px; height: 7px; margin-left: auto; flex: none; }
.mesh { height: 74px; margin-bottom: 4px; overflow: hidden; }
fieldset { margin: 9.300px 8px 0; height: 23.500px; box-sizing: border-box; border: 1px solid #bfc8dc; border-radius: 2px; padding: 0 0 0 5.500px; min-width: 0; }
legend { padding: 0 1px; line-height: 6px; white-space: nowrap; letter-spacing: -.17px; }
.choice { display: flex; padding-top: 3px; gap: 5px; }
label { display: flex; align-items: center; line-height: 8px; white-space: nowrap; }
.choice label { letter-spacing: -.15px; }
.radio { width: 7px; height: 7px; box-sizing: border-box; border-radius: 50%; border: .8px solid #888; background: #f6f6f6; margin-right: 2px; flex: none; }
.radio.on { border: 2.200px solid #0067c0; background: #fff; }
.geo { height: 171.500px; overflow: hidden; }
p { margin: 6.300px 0 0 6.500px; line-height: 6.700px; white-space: nowrap; letter-spacing: -.2px; }
.add { display: block; width: 188.500px; height: 10.300px; margin: 3.300px 0 0 7.700px; }
ul { list-style: none; margin: 3.500px 0 0 6.700px; padding: .3px 0 0; width: 191px; height: 96.500px; box-sizing: border-box; border: 1px solid #a4aab9; background: #fff; }
li { height: 8.550px; line-height: 8.550px; padding-left: 1.700px; font-size: 5.540px; }
li.sel { background: #d9d9d9; }
.mode { display: flex; align-items: center; height: 15px; padding-left: 6.500px; }
.mode-name { width: 65px; letter-spacing: -.25px; }
.mode label + label { margin-left: 8px; letter-spacing: -.15px; }
.stage { flex: 1; display: flex; flex-direction: column; min-width: 0; }
.view { display: block; width: 100%; height: 361px; flex: none; }
.shot-c .view, .shot-d .view { height: 362px; }
.doc-tabs { height: 11.800px; display: flex; padding-left: 4px; }
.doc { width: 53px; padding-left: 1.500px; box-sizing: border-box; display: flex; align-items: center; font-size: 5.400px; line-height: 11px; white-space: nowrap; background: #f3f3f3; }
.doc svg { width: 8px; height: 8px; margin-right: 1.500px; }
.doc.on { width: 67px; padding-left: 6px; background: #fafafa; }
.close { width: 7px; height: 7px; margin-left: 2px; background: #c9c9c9; color: #fff; font: 700 7px/6.500px "Liberation Sans", sans-serif; text-align: center; border-radius: 1px; }
.close.red { background: #e3694e; }
.nav text, .triad text { font-family: "Open Sans", sans-serif; }
.triad text { font-size: 5px; font-weight: 700; fill: #111; }
</style>
